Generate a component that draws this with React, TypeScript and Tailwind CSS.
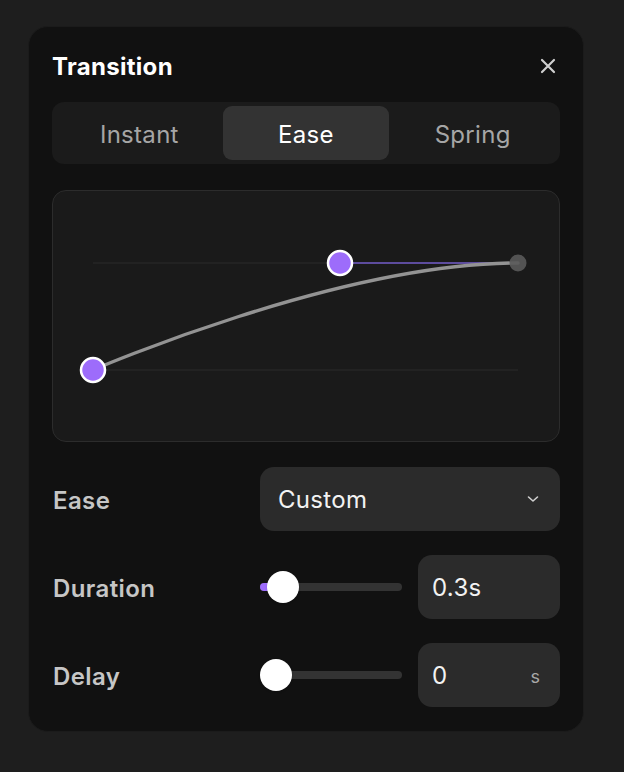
import { useState } from 'react'

const tabs = ['Instant', 'Ease', 'Spring']

// curve box inner coordinates (ease-out: cubic-bezier(0, 0, 0.58, 1))
const P0 = { x: 40, y: 179 }
const P3 = { x: 465, y: 72 }
const P2 = { x: 287, y: 72 }

function CurveEditor() {
  return (
    <div className="h-[252px] rounded-[14px] border border-[#2c2c2c] bg-[#1a1a1a]">
      <svg viewBox="0 0 506 250" width="506" height="250" className="block">
        <line x1={P0.x} y1={P3.y} x2={P3.x} y2={P3.y} stroke="#2a2a2a" strokeWidth="1" />
        <line x1={P0.x} y1={P0.y} x2={P3.x} y2={P0.y} stroke="#2a2a2a" strokeWidth="1" />
        <line x1={P2.x} y1={P2.y} x2={P3.x} y2={P3.y} stroke="#5d4c9e" strokeWidth="2" />
        <path
          d={`M${P0.x} ${P0.y} C${P0.x} ${P0.y} ${P2.x} ${P2.y} ${P3.x} ${P3.y}`}
          fill="none"
          stroke="#939393"
          strokeWidth="3.4"
          strokeLinecap="round"
        />
        <circle cx={P3.x} cy={P3.y} r="8.5" fill="#5a5a5a" opacity="0.9" />
        <circle cx={P2.x} cy={P2.y} r="12" fill="#9d6cfb" stroke="#ffffff" strokeWidth="2.5" />
        <circle cx={P0.x} cy={P0.y} r="12" fill="#9d6cfb" stroke="#ffffff" strokeWidth="2.5" />
      </svg>
    </div>
  )
}

function Slider({ value, max }: { value: number; max: number }) {
  const pct = value / max
  return (
    <div className="relative h-8 w-[142px] flex items-center">
      <div className="h-2 w-full rounded-full bg-[#333333]" />
      {pct > 0 ? (
        <div
          className="absolute left-0 h-2 rounded-full bg-[#9d6cfb]"
          style={{ width: `${16 + pct * 110}px` }}
        />
      ) : null}
      <div
        className="absolute top-0 h-8 w-8 rounded-full bg-white shadow"
        style={{ left: `${pct * 110}px` }}
      />
    </div>
  )
}

function Row({ label, children }: { label: string; children: React.ReactNode }) {
  return (
    <div className="flex items-center h-16">
      <span className="w-[208px] shrink-0 pl-px pt-[3px] text-[24px] font-semibold tracking-[0.4px] text-[#c6c6c6]">
        {label}
      </span>
      {children}
    </div>
  )
}

export default function App() {
  const [tab, setTab] = useState('Ease')

  return (
    <div
      className="min-h-[772px] w-[624px] bg-[#1e1e1e] pl-[28px] pt-[26px]"
      style={{ fontFamily: 'Inter, "Noto Sans", sans-serif' }}
    >
      <div className="w-[556px] h-[706px] rounded-[20px] bg-[#111111] border border-[#1b1b1b] px-[23px] pt-[23px]">
        <div className="flex items-center justify-between h-8">
          <h2 className="pt-[2px] text-[24px] font-bold tracking-[0.3px] text-white">Transition</h2>
          <button type="button" aria-label="Close" className="mr-1 text-[#cfcfcf]">
            <svg width="16" height="16" viewBox="0 0 16 16" fill="none" stroke="currentColor" strokeWidth="2.2" strokeLinecap="round">
              <path d="M2 2l12 12M14 2L2 14" />
            </svg>
          </button>
        </div>

        <div className="mt-5 grid grid-cols-3 rounded-[12px] bg-[#1b1b1b] p-1 h-[62px]">
          {tabs.map((t) => (
            <button
              key={t}
              type="button"
              onClick={() => setTab(t)}
              className={
                t === tab
                  ? 'rounded-[9px] bg-[#333333] pt-[3px] text-[24px] tracking-[0.3px] text-white'
                  : 'rounded-[9px] pt-[3px] text-[24px] tracking-[0.3px] text-[#a6a6a6]'
              }
            >
              {t}
            </button>
          ))}
        </div>

        <div className="mt-[26px]">
          <CurveEditor />
        </div>

        <div className="mt-[25px] flex flex-col gap-6">
          <Row label="Ease">
            <div className="flex h-16 w-[300px] items-center justify-between rounded-[14px] bg-[#2b2b2b] pl-[18px] pr-[21px]">
              <span className="pt-[2px] text-[24px] tracking-[0.3px] text-[#f2f2f2]">Custom</span>
              <svg width="12" height="8" viewBox="0 0 12 8" fill="none" stroke="#d0d0d0" strokeWidth="1.6" strokeLinecap="round" strokeLinejoin="round">
                <path d="M1.5 2l4.5 4 4.5-4" />
              </svg>
            </div>
          </Row>
          <Row label="Duration">
            <Slider value={0.3} max={5} />
            <div className="ml-4 flex h-16 w-[142px] items-center rounded-[14px] bg-[#2b2b2b] px-[14px]">
              <span className="pt-[2px] text-[24px] tracking-[0.3px] text-[#f2f2f2]">0.3s</span>
            </div>
          </Row>
          <Row label="Delay">
            <Slider value={0} max={5} />
            <div className="ml-4 flex h-16 w-[142px] items-center justify-between rounded-[14px] bg-[#2b2b2b] pl-[14px] pr-[20px]">
              <span className="pt-[2px] text-[24px] text-[#f2f2f2]">0</span>
              <span className="pt-[2px] text-[18px] text-[#a8a8a8]">s</span>
            </div>
          </Row>
        </div>
      </div>
    </div>
  )
}
